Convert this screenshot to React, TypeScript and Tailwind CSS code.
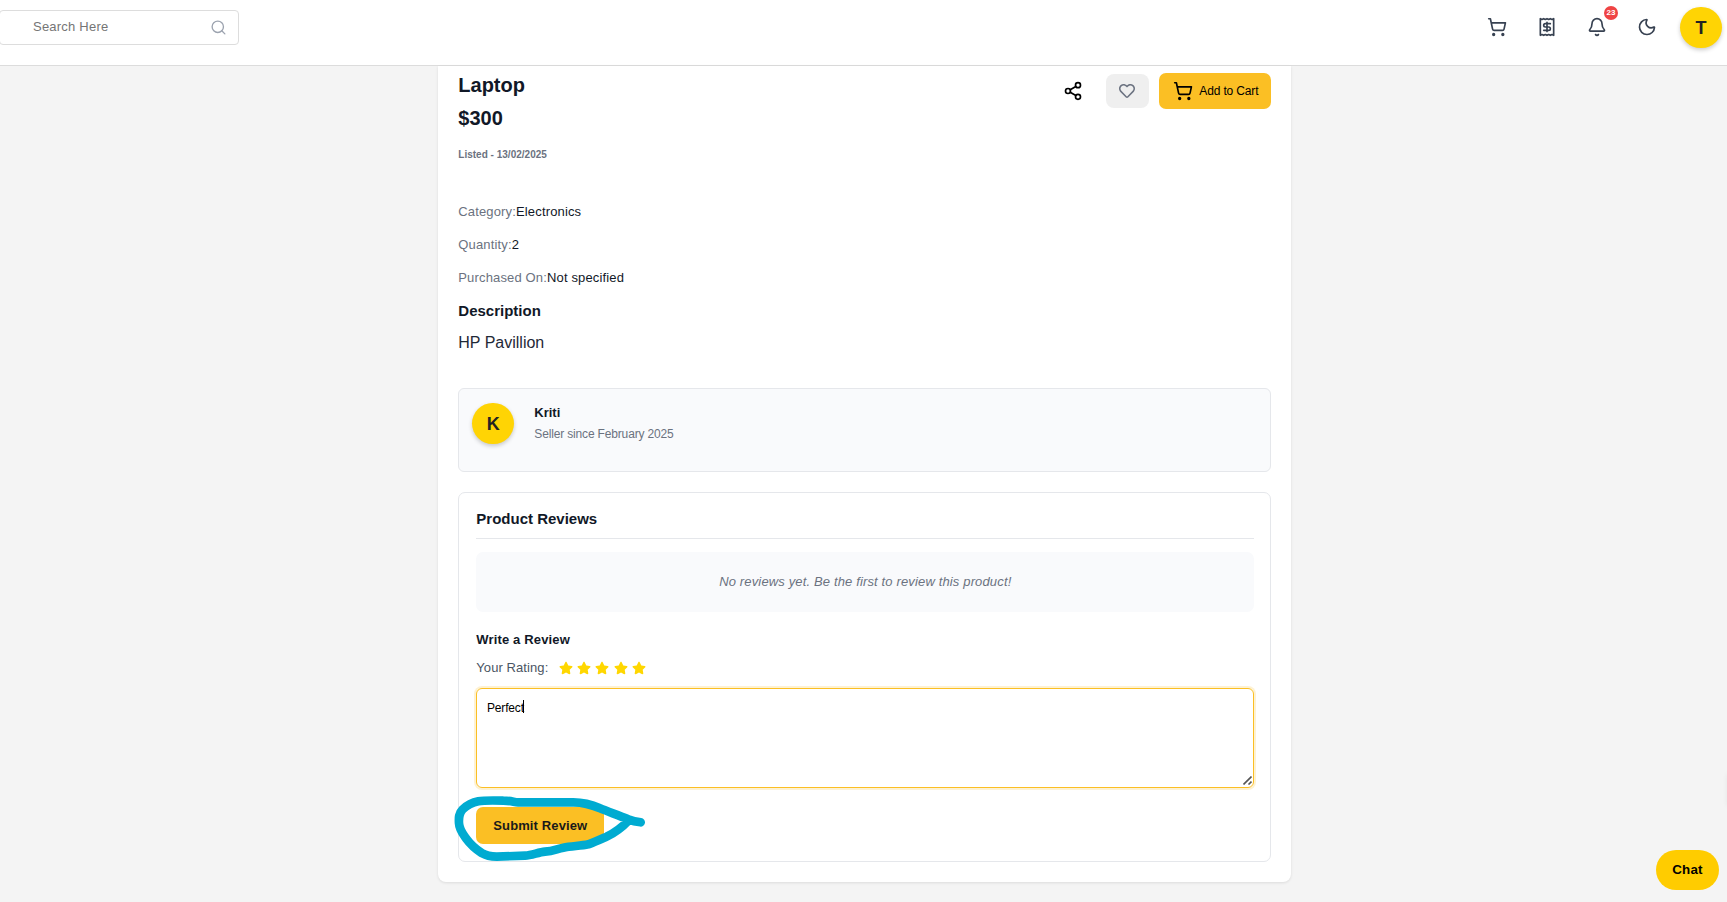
import { Bell, Moon, Receipt, Search, Share2, ShoppingCart } from 'lucide-react';
import { FaRegHeart, FaStar } from 'react-icons/fa';

const details = [
  { label: 'Category:', value: 'Electronics' },
  { label: 'Quantity:', value: '2' },
  { label: 'Purchased On:', value: 'Not specified' },
];

function Avatar({ letter }: { letter: string }) {
  return (
    <div className="flex h-[41px] w-[42px] shrink-0 items-center justify-center rounded-full bg-[#ffd404] text-[18px] leading-5 font-bold text-[#222] shadow-[0_2px_4px_rgba(0,0,0,0.2)]">
      {letter}
    </div>
  );
}

function Header() {
  return (
    <header className="flex h-[66px] shrink-0 items-start justify-between border-b border-[#dcdcdc] bg-white">
      <div className="mt-[10px] -ml-px flex h-[35px] w-[240px] items-center justify-between rounded-[4px] border border-[#ddd] pr-[11px] pl-[33px]">
        <span className="pb-[3px] text-[13px] leading-[15px] tracking-[0.22px] text-[#757575]">Search Here</span>
        <Search size={17} className="mb-px text-[#9ca3af]" strokeWidth={1.9} />
      </div>
      <div className="mt-[7px] mr-[5px] flex items-start text-[#374151]">
        <div className="flex gap-[30px] pt-[10px] pr-[23px]">
          <ShoppingCart size={20} />
          <Receipt size={20} />
          <div className="relative">
            <Bell size={20} />
            <span className="absolute -top-[11px] left-[17px] flex h-[14px] w-[14px] items-center justify-center rounded-full bg-[#ef4444] text-[8px] leading-none font-bold text-white">
              23
            </span>
          </div>
          <Moon size={20} />
        </div>
        <Avatar letter="T" />
      </div>
    </header>
  );
}

function ProductInfo() {
  return (
    <section className="text-[#111827]">
      <div className="flex justify-between">
        <div className="pt-[3px] text-[20px] leading-8 font-bold">
          <h1 className="mb-px">Laptop</h1>
          <p>$300</p>
        </div>
        <div className="mt-[7px] flex h-9 items-center text-black">
          <Share2 size={20} className="mr-[23px]" />
          <button className="mr-[10px] flex h-[34px] w-[43px] items-center justify-center rounded-[8px] bg-[#efefef] pr-px text-[#6b7280]">
            <FaRegHeart size={16} />
          </button>
          <button className="flex h-9 w-[112px] items-center rounded-[7px] bg-[#fbbf24] pl-[14px] text-[12px] leading-[14px] tracking-[-0.15px] whitespace-nowrap">
            <ShoppingCart size={20} className="mr-[6px]" />
            Add to Cart
          </button>
        </div>
      </div>
      <p className="mt-[13px] text-[10px] leading-[15px] font-bold tracking-[0.01px] text-[#6b7280]">Listed - 13/02/2025</p>
      <dl className="mt-[33px] text-[13px] leading-[33px] tracking-[0.15px]">
        {details.map((d) => (
          <div key={d.label} className="flex">
            <dt className="text-[#6b7280]">{d.label}</dt>
            <dd>{d.value}</dd>
          </div>
        ))}
      </dl>
      <h2 className="mt-[8px] text-[15px] leading-[17px] font-bold">Description</h2>
      <p className="mt-[15px] text-[16px] leading-[17px] text-[#1f2937]">HP Pavillion</p>
    </section>
  );
}

function SellerCard() {
  return (
    <section className="mt-[37px] flex h-[84px] rounded-[6px] border border-[#e5e7eb] bg-[#f9fafc] px-[13px] pt-[14px]">
      <Avatar letter="K" />
      <div className="ml-5 pt-[2px]">
        <h3 className="text-[13px] leading-[15px] font-bold text-[#111827]">Kriti</h3>
        <p className="mt-[7px] text-[12px] leading-[14px] tracking-[-0.16px] text-[#6b7280]">Seller since February 2025</p>
      </div>
    </section>
  );
}

function Reviews() {
  return (
    <section className="mt-5 h-[370px] rounded-[7px] border border-[#e5e7eb] pt-[17px] pr-[16px] pl-[17px] text-[#111827]">
      <h2 className="border-b border-[#e5e7eb] pb-[11px] text-[15px] leading-[17px] font-bold">Product Reviews</h2>
      <p className="mt-[13px] h-[60px] rounded-[7px] bg-[#f9fafc] pt-[22px] text-center text-[13px] leading-[15px] tracking-[0.145px] text-[#6b7280] italic">
        No reviews yet. Be the first to review this product!
      </p>
      <h3 className="mt-5 text-[13px] leading-[15px] font-bold tracking-[0.15px]">Write a Review</h3>
      <div className="mt-[13px] flex h-[15px] text-[13px] leading-[15px] text-[#4b5563]">
        <span className="w-[82.7px] tracking-[0.08px]">Your Rating:</span>
        <div className="flex gap-[4.25px] pt-px text-[#ffd700]">
          {[1, 2, 3, 4, 5].map((n) => (
            <FaStar key={n} size={14} />
          ))}
        </div>
      </div>
      <div className="relative mt-[13px] flex h-[100px] items-start rounded-[6px] border border-[#fbbf24] pt-3 pl-[9.7px] text-[12px] leading-[14px] tracking-[-0.16px] text-black shadow-[0_0_0_2px_rgba(251,191,36,0.2)]">
        Perfect
        <span className="-mt-px -ml-px h-[13px] w-px bg-black" />
        <svg className="absolute right-px bottom-[2px]" width="9" height="9" viewBox="0 0 9 9" stroke="#555" strokeWidth="1.6">
          <path d="M0.5 8.5 8.5 0.5M5.5 8.5 8.5 5.5" />
        </svg>
      </div>
      <div className="relative mt-[19px]">
        <button className="flex h-[37px] w-32 items-center justify-center rounded-[7px] bg-[#fbbf24] text-[13px] leading-[15px] font-bold tracking-[0.12px] text-[#1a1a1a]">
          Submit Review
        </button>
        <svg className="pointer-events-none absolute -top-[17px] -left-[26px]" width="200" height="77" viewBox="60 330 600 231" fill="none">
          <path
            d="M632 427C618 425 606 422 595 418C565 406 535 395 510 385C485 374 460 367 430 367H265C250 366 245 362 220 362C185 361 160 361 145 364C125 368 110 377 98 388C86 400 86 413 87 430C88 450 100 463 108 475C122 494 138 508 155 519C170 528 180 530 200 530L285 527C305 526 325 517 345 515C370 513 380 507 400 503C425 498 452 498 475 493C495 486 510 479 530 470C550 460 575 443 595 422"
            stroke="#00abd1"
            strokeWidth="26"
            strokeLinecap="round"
            strokeLinejoin="round"
          />
        </svg>
      </div>
    </section>
  );
}

export default function App() {
  return (
    <div className="relative flex h-[902px] w-full flex-col overflow-hidden bg-[#f4f4f4] font-['Liberation_Sans',Arial,sans-serif]">
      <Header />
      <main className="flex justify-center pl-[2.6px]">
        <div className="h-[816px] w-[853px] rounded-b-[8px] bg-white px-5 shadow-[0_1px_3px_rgba(0,0,0,0.1)]">
          <ProductInfo />
          <SellerCard />
          <Reviews />
        </div>
      </main>
      <div className="absolute top-[774px] -right-[10px] h-8 w-[10px] shadow-[0_0_5px_rgba(0,0,0,0.06)]" />
      <button className="absolute right-2 bottom-3 flex h-10 w-[63px] items-center justify-center rounded-full bg-[#ffcc00] pb-px text-[13.33px] font-bold tracking-[0.2px] text-black">
        Chat
      </button>
    </div>
  );
}
